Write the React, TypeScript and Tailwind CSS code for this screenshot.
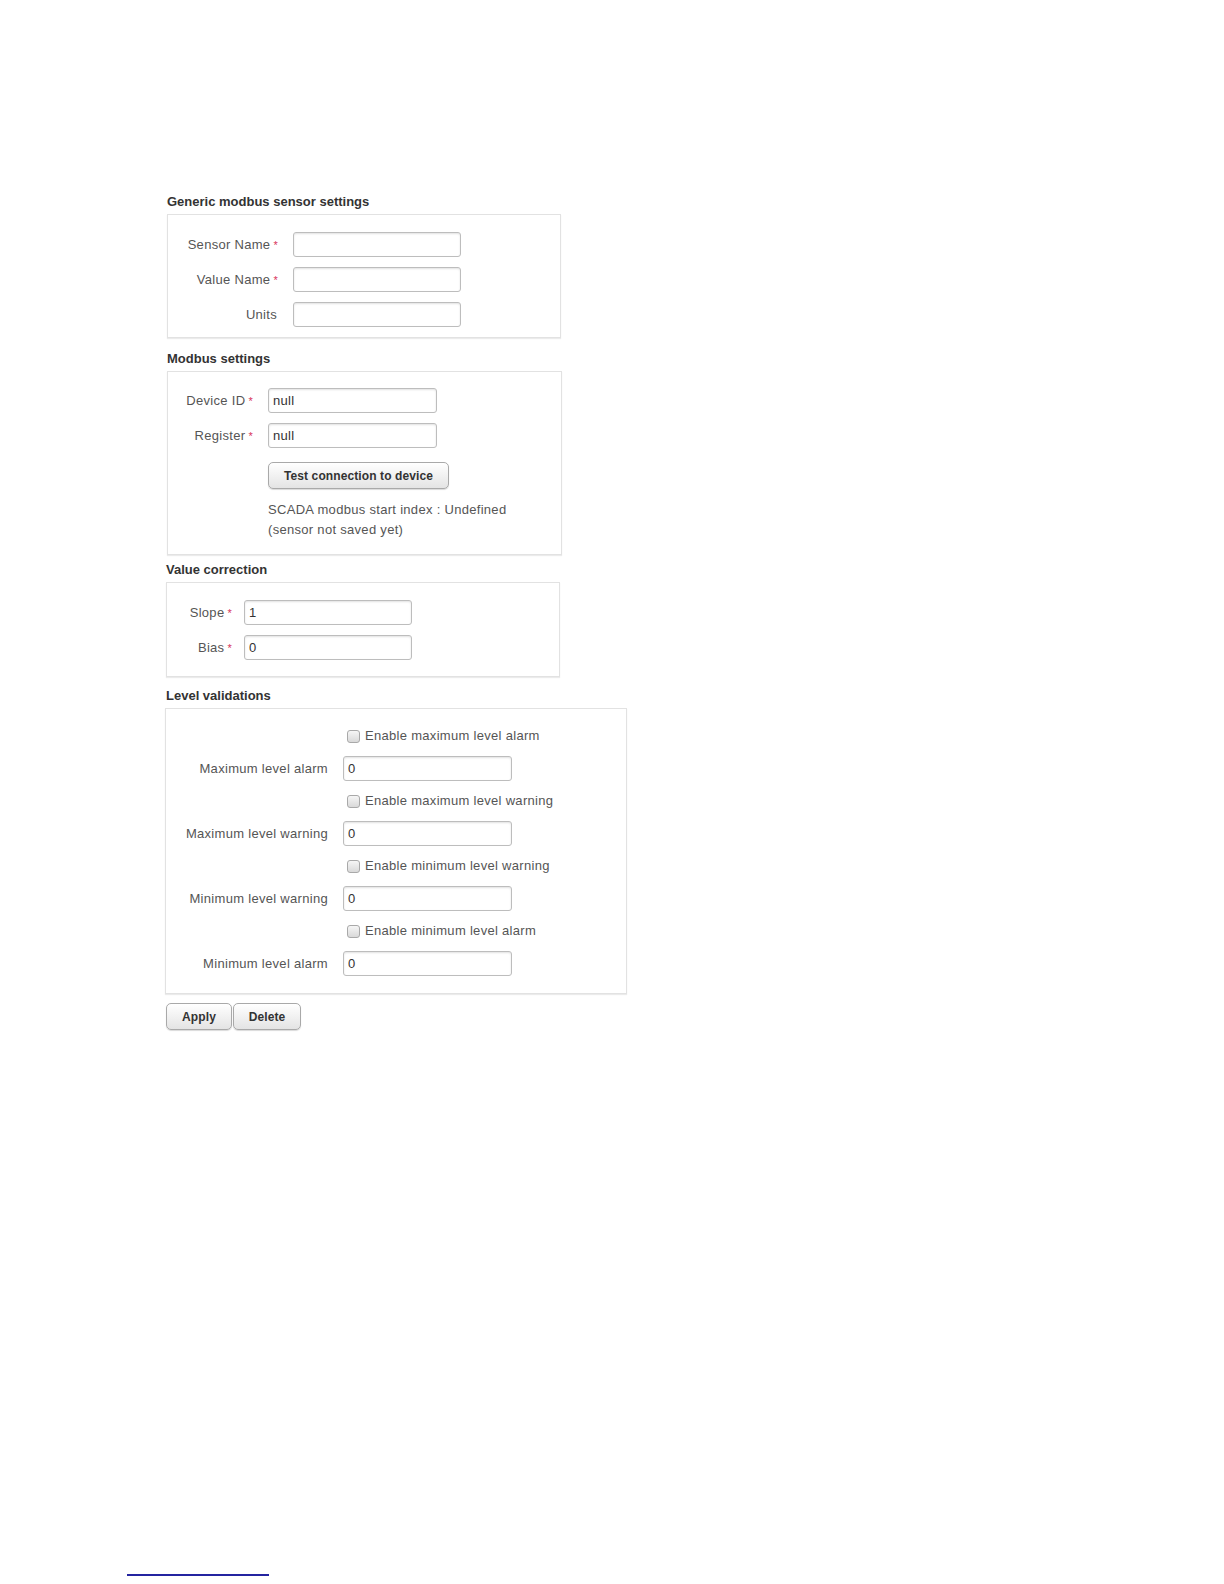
import React from "react";

const Req = () => (
  <span className="ml-[3px] text-[11px] text-[#d8315b]">*</span>
);

const Field = ({ value = "" }: { value?: string }) => (
  <input
    type="text"
    defaultValue={value}
    className="h-[25px] w-full rounded-[3px] border border-[#bdbdbd] bg-white px-[4px] text-[13px] text-[#333] shadow-[inset_0_1px_2px_rgba(0,0,0,0.12)] outline-none"
  />
);

const Btn = ({ children, className = "" }: { children: React.ReactNode; className?: string }) => (
  <button
    type="button"
    className={
      "h-[27px] rounded-[5px] border border-[#a9a9a9] bg-linear-to-b from-white to-[#e4e4e4] text-[12px] font-bold tracking-[0.1px] text-[#333] shadow-[0_1px_1px_rgba(0,0,0,0.15)] " +
      className
    }
  >
    {children}
  </button>
);

const Heading = ({ children, className = "" }: { children: React.ReactNode; className?: string }) => (
  <h3 className={"h-[20px] text-[13px] leading-[20px] font-bold tracking-normal text-[#333] " + className}>{children}</h3>
);

const Box = ({ children, className = "" }: { children: React.ReactNode; className?: string }) => (
  <div className={"mt-[2px] border border-[#e2e2e2] bg-white shadow-[0_1px_1px_rgba(0,0,0,0.08)] " + className}>
    {children}
  </div>
);

const Label = ({ children, className = "" }: { children: React.ReactNode; className?: string }) => (
  <span className={"whitespace-nowrap text-right " + className}>{children}</span>
);

const Check = ({ label }: { label: string }) => (
  <label className="col-start-2 flex h-[20px] items-center whitespace-nowrap pl-[4px]">
    <input
      type="checkbox"
      className="h-[13px] w-[13px] shrink-0 appearance-none rounded-[3px] border border-[#a9a9a9] bg-linear-to-b from-[#f6f6f6] to-[#d9d9d9]"
    />
    <span className="ml-[5px] text-[13px] text-[#555]">{label}</span>
  </label>
);

const levels = [
  { check: "Enable maximum level alarm", label: "Maximum level alarm" },
  { check: "Enable maximum level warning", label: "Maximum level warning" },
  { check: "Enable minimum level warning", label: "Minimum level warning" },
  { check: "Enable minimum level alarm", label: "Minimum level alarm" },
];

export default function App() {
  return (
    <div className="min-h-[1584px] bg-white pt-[192px] font-['Liberation_Sans',Arial,sans-serif] text-[13px] tracking-[0.3px] text-[#555]">
      <div className="pl-[165px]">
        {/* Generic */}
        <div className="ml-[2px] w-[394px]">
          <Heading>Generic modbus sensor settings</Heading>
          <Box className="pt-[17px] pb-[10px] pl-[12px]">
            <div className="grid grid-cols-[98px_168px] items-center gap-x-[15px] gap-y-[10px]">
              <Label>Sensor Name<Req /></Label>
              <Field />
              <Label>Value Name<Req /></Label>
              <Field />
              <Label className="pr-[1px]">Units</Label>
              <Field />
            </div>
          </Box>
        </div>

        {/* Modbus */}
        <div className="mt-[11px] ml-[2px] w-[395px]">
          <Heading>Modbus settings</Heading>
          <Box className="pt-[16px] pb-[14px] pl-[12px]">
            <div className="grid grid-cols-[73px_169px] items-center gap-x-[15px] gap-y-[10px]">
              <Label>Device ID<Req /></Label>
              <Field value="null" />
              <Label>Register<Req /></Label>
              <Field value="null" />
            </div>
            <div className="ml-[88px] mt-[14px]">
              <Btn className="w-[181px]">Test connection to device</Btn>
              <p className="mt-[11px] whitespace-nowrap leading-[20px] text-[#555]">
                SCADA modbus start index : Undefined
                <br />
                (sensor not saved yet)
              </p>
            </div>
          </Box>
        </div>

        {/* Value correction */}
        <div className="mt-[5px] ml-[1px] w-[394px]">
          <Heading>Value correction</Heading>
          <Box className="pt-[17px] pb-[16px] pl-[12px]">
            <div className="grid grid-cols-[53px_168px] items-center gap-x-[12px] gap-y-[10px]">
              <Label>Slope<Req /></Label>
              <Field value="1" />
              <Label>Bias<Req /></Label>
              <Field value="0" />
            </div>
          </Box>
        </div>

        {/* Level validations */}
        <div className="mt-[9px] w-[462px]">
          <Heading className="ml-px">Level validations</Heading>
          <Box className="pt-[17px] pb-[17px] pl-[12px]">
            <div className="grid grid-cols-[150px_169px] items-center gap-x-[15px] gap-y-[10px]">
              {levels.map((l) => (
                <React.Fragment key={l.label}>
                  <Check label={l.check} />
                  <Label>{l.label}</Label>
                  <Field value="0" />
                </React.Fragment>
              ))}
            </div>
          </Box>
        </div>

        <div className="mt-[9px] ml-px flex gap-px">
          <Btn className="h-[27px] w-[66px]">Apply</Btn>
          <Btn className="h-[27px] w-[68px]">Delete</Btn>
        </div>
      </div>

      <div className="mt-[544px] ml-[127px] h-[2px] w-[142px] bg-[#2424a0]" />
    </div>
  );
}
